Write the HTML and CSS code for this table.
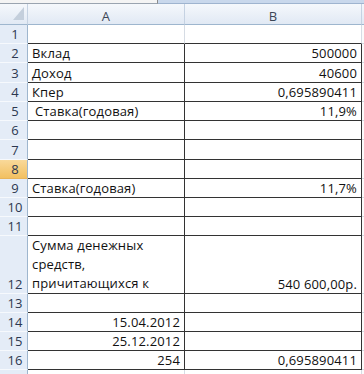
FILE: index.html
```html
<!DOCTYPE html>
<html lang="ru">
<head>
<meta charset="utf-8">
<title>Лист</title>
<link rel="stylesheet" href="styles.css">
</head>
<body>
<div class="sheet">
  <div class="topbar"><div class="tb-left"></div><div class="tb-right"></div></div>
  <div class="grid">
    <div class="corner"><span class="tri"></span></div>
    <div class="colhead">A</div>
    <div class="colhead">B</div>
    <div class="colhead edge"></div>

    <div class="rh h19">1</div><div class="c plain a"></div><div class="c plain b"></div><div class="c rest"></div>
    <div class="rh h19">2</div><div class="c a">Вклад</div><div class="c b num">500000</div><div class="c rest"></div>
    <div class="rh h20">3</div><div class="c a">Доход</div><div class="c b num">40600</div><div class="c rest"></div>
    <div class="rh h19">4</div><div class="c a">Кпер</div><div class="c b num">0,695890411</div><div class="c rest"></div>
    <div class="rh h19">5</div><div class="c a indent">Ставка(годовая)</div><div class="c b num">11,9%</div><div class="c rest"></div>
    <div class="rh h19">6</div><div class="c a"></div><div class="c b"></div><div class="c rest"></div>
    <div class="rh h20">7</div><div class="c a"></div><div class="c b"></div><div class="c rest"></div>
    <div class="rh h19 sel">8</div><div class="c a"></div><div class="c b"></div><div class="c rest"></div>
    <div class="rh h19">9</div><div class="c a">Ставка(годовая)</div><div class="c b num">11,7%</div><div class="c rest"></div>
    <div class="rh h19">10</div><div class="c a"></div><div class="c b"></div><div class="c rest"></div>
    <div class="rh h19">11</div><div class="c a"></div><div class="c b"></div><div class="c rest"></div>
    <div class="rh h58">12</div><div class="c a wrap">Сумма денежных<br>средств,<br>причитающихся к</div><div class="c b num">540 600,00р.</div><div class="c rest"></div>
    <div class="rh h19">13</div><div class="c a"></div><div class="c b"></div><div class="c rest"></div>
    <div class="rh h19">14</div><div class="c a num">15.04.2012</div><div class="c b"></div><div class="c rest"></div>
    <div class="rh h19">15</div><div class="c a num">25.12.2012</div><div class="c b"></div><div class="c rest"></div>
    <div class="rh h19">16</div><div class="c a num">254</div><div class="c b num">0,695890411</div><div class="c rest"></div>
    <div class="rh h19"></div><div class="c plain a"></div><div class="c plain b"></div><div class="c rest"></div>
  </div>
</div>
</body>
</html>
```

FILE: styles.css
```css
html, body {
  margin: 0;
  padding: 0;
  background: #ffffff;
}
body {
  font-family: "Open Sans", "Noto Sans", sans-serif;
  font-size: 13px;
  letter-spacing: 0.15px;
  color: #111111;
  overflow: hidden;
}
.sheet {
  width: 364px;
  height: 374px;
  overflow: hidden;
}
.topbar {
  display: flex;
  height: 4px;
}
.tb-left {
  width: 158px;
  background: #f4f4f4;
  border-bottom: 1px solid #9aa4b0;
  border-right: 1px solid #8a8a8a;
  box-sizing: border-box;
}
.tb-right {
  flex: 1;
  background: #c9d8ec;
  border-bottom: 1px solid #9fb4cf;
  box-sizing: border-box;
}
.grid {
  display: grid;
  grid-template-columns: 28px 157px 177px 2px;
  grid-auto-rows: auto;
}
.corner, .colhead {
  height: 21px;
  box-sizing: border-box;
  background: linear-gradient(#f5f8fc, #e1e9f4);
  border-bottom: 1px solid #9eb6ce;
  border-right: 1px solid #c5d2e2;
}
.corner {
  display: flex;
  justify-content: flex-end;
  align-items: flex-end;
  padding: 0 3px 4px 0;
}
.tri {
  width: 11px;
  height: 13px;
  background: #c4cfdc;
  clip-path: polygon(100% 0, 100% 100%, 0 100%);
}
.colhead {
  display: flex;
  justify-content: center;
  align-items: center;
  padding-top: 3px;
  color: #3c4656;
}
.colhead.edge {
  border-right: none;
}
.rh {
  box-sizing: border-box;
  background: #e4ecf7;
  border-right: 1px solid #9eb6ce;
  border-bottom: 1px solid #f6f9fd;
  display: flex;
  align-items: flex-end;
  justify-content: center;
  padding-left: 3px;
  padding-bottom: 1px;
  line-height: 15px;
  color: #2c3850;
}
.rh.sel {
  background: linear-gradient(#f9d99a, #f2c061);
  border-bottom-color: #e8b45a;
}
.h19 { height: 19px; }
.h20 { height: 20px; }
.h58 { height: 58px; }
.c {
  box-sizing: border-box;
  border-bottom: 1px solid #333333;
  border-right: 1px solid #333333;
  display: flex;
  align-items: flex-end;
  padding: 0 4px 1px 4px;
  line-height: 15px;
  white-space: nowrap;
  overflow: hidden;
}
.c.num {
  justify-content: flex-end;
}
.c.indent {
  padding-left: 7px;
}
.c.wrap {
  line-height: 19px;
  padding-bottom: 0;
}
.c.plain {
  border-right-color: #d6dce4;
}
.c.rest {
  border-right: none;
  border-bottom: 1px solid #d6dce4;
  padding: 0;
  background: #fbfbfb;
}
```
